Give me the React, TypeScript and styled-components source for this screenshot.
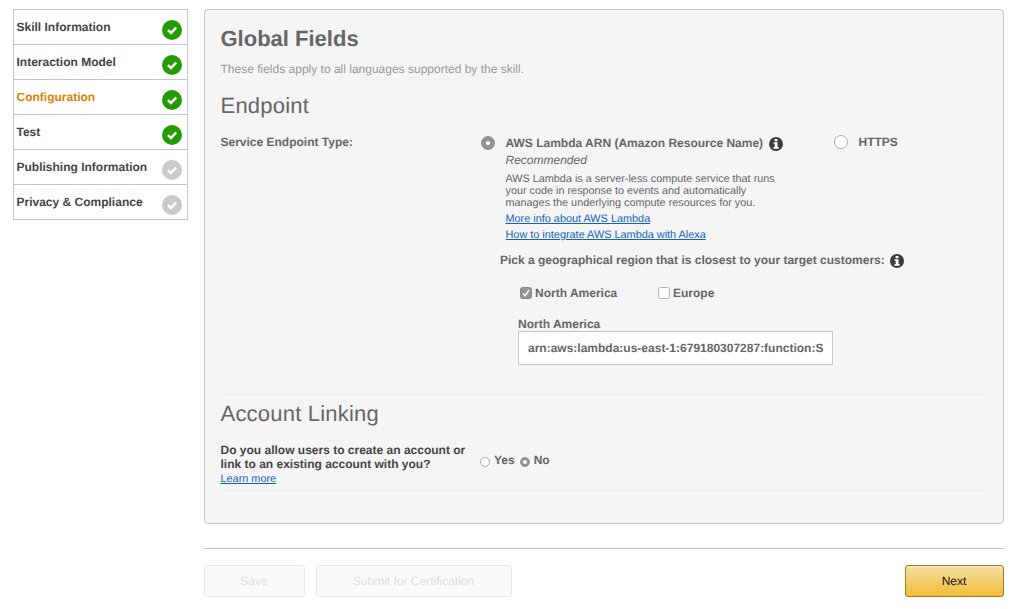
import React from 'react';
import styled, { createGlobalStyle } from 'styled-components';

const GlobalStyle = createGlobalStyle`
  *, *::before, *::after { box-sizing: border-box; }
  body {
    margin: 0;
    background: #fff;
    color: #666;
    font-family: "Liberation Sans", Arial, Helvetica, sans-serif;
    font-size: 12px;
    line-height: 16px;
    text-rendering: geometricPrecision;
  }
`;

const Page = styled.div`
  display: flex;
  align-items: flex-start;
  gap: 16px;
  width: 1016px;
  height: 609px;
  padding: 9px 12px 0 13px;
  overflow: hidden;
`;

const StepList = styled.ul`
  flex: none;
  width: 175px;
  margin: 0;
  padding: 0;
  list-style: none;
  border: 1px solid #c7c7c7;
`;

const Step = styled.li<{ $active?: boolean }>`
  display: flex;
  justify-content: space-between;
  height: 35px;
  padding: 9px 5px 0 2.5px;
  font-weight: bold;
  color: ${p => (p.$active ? '#db7f00' : '#444')};
  & + & { border-top: 1px solid #c7c7c7; }
  &:first-child { height: 34px; }
  svg { flex: none; margin-top: 1px; }
`;

const Main = styled.main`
  flex: none;
  width: 800px;
`;

const Panel = styled.section`
  height: 515px;
  padding: 15px 17px 0 15.5px;
  background: #f5f5f5;
  border: 1px solid #c4c4c4;
  border-radius: 4px;
`;

const Title = styled.h1`
  margin: 0;
  font-size: 22px;
  line-height: 28px;
`;

const Intro = styled.p`
  margin: 8px 0 15px;
  color: #999;
`;

const SectionTitle = styled.h2`
  margin: 0;
  font-size: 22px;
  font-weight: normal;
  line-height: 28px;
  letter-spacing: 0.21px;
`;

const EndpointRow = styled.div`
  display: flex;
  align-items: flex-start;
  height: 274px;
  padding-top: 14px;
`;

const FieldLabel = styled.div`
  flex: none;
  width: 260px;
  font-weight: bold;
`;

const EndpointFields = styled.div`
  flex: 1;
`;

const Choices = styled.div`
  display: flex;
  align-items: flex-start;
`;

const LambdaChoice = styled.div`
  display: flex;
  gap: 11px;
  width: 353px;
  padding-top: 1px;
`;

const HttpsChoice = styled.div`
  display: flex;
  gap: 11px;
  font-weight: bold;
`;

const RadioDot = styled.span<{ $size: number; $checked?: boolean }>`
  flex: none;
  display: flex;
  align-items: center;
  justify-content: center;
  width: ${p => p.$size}px;
  height: ${p => p.$size}px;
  margin-top: 1px;
  border-radius: 50%;
  background: ${p => (p.$checked ? '#929297' : '#fff')};
  border: 1px solid ${p => (p.$checked ? '#929297' : '#ababab')};
  &::after {
    content: '';
    display: ${p => (p.$checked ? 'block' : 'none')};
    width: 4px;
    height: 4px;
    border-radius: 50%;
    background: #fff;
  }
`;

const ChoiceName = styled.div`
  display: flex;
  gap: 5.5px;
  height: 17px;
  font-weight: bold;
  white-space: nowrap;
  svg { flex: none; margin-top: 2px; }
`;

const Recommended = styled.em`
  display: block;
  height: 21px;
`;

const Description = styled.p`
  width: 285px;
  margin: 0 0 2px;
  font-size: 10.84px;
  line-height: 12px;
`;

const Link = styled.a<{ $line: number }>`
  display: block;
  width: max-content;
  font-size: 10.88px;
  line-height: ${p => p.$line}px;
  color: #0f62bd;
  text-decoration: underline;
`;

const RegionPrompt = styled.div`
  display: flex;
  gap: 5.5px;
  padding: 9px 0 0 19.5px;
  font-weight: bold;
  svg { flex: none; margin-top: 2px; }
`;

const Regions = styled.div`
  display: flex;
  margin: 17px 0 15px 39px;
  font-weight: bold;
`;

const Region = styled.div`
  display: flex;
  gap: 3.5px;
  width: 138px;
  svg { flex: none; margin-top: 2px; }
`;

const ArnField = styled.label`
  display: block;
  width: 315px;
  margin-left: 37.5px;
  font-weight: bold;
`;

const ArnInput = styled.input`
  display: block;
  width: 315px;
  height: 34px;
  margin-top: -1px;
  padding: 0 9px;
  border: 1px solid #c4c4c4;
  border-radius: 0;
  background: #fff;
  color: #666;
  font: bold 12px "Liberation Sans", Arial, sans-serif;
  text-rendering: geometricPrecision;
`;

const LinkingSection = styled.div`
  height: 97px;
  padding-top: 5px;
  border: solid #e9e9e9;
  border-width: 1px 0;
`;

const LinkingRow = styled.div`
  display: flex;
  padding-top: 15px;
`;

const Question = styled.div`
  flex: none;
  width: 259.5px;
  font-weight: bold;
  line-height: 14px;
  color: #444;
  white-space: nowrap;
  a { font-weight: normal; }
`;

const Answers = styled.div`
  display: flex;
  gap: 5px;
  padding-top: 9px;
  font-weight: bold;
`;

const Answer = styled.div`
  display: flex;
  gap: 4px;
  span { margin-top: 5px; }
`;

const Footer = styled.footer`
  display: flex;
  margin-top: 24px;
  padding-top: 16px;
  border-top: 1px solid #c4c4c4;
`;

const Button = styled.button<{ $width: number; $primary?: boolean }>`
  width: ${p => p.$width}px;
  height: 32px;
  margin: ${p => (p.$primary ? '0 0 0 auto' : '0 11px 0 0')};
  padding: 0 1px 0 0;
  border: 1px solid ${p => (p.$primary ? '#9a7b24' : '#e7e7e7')};
  border-radius: 3px;
  background: ${p => (p.$primary ? 'linear-gradient(#f7dfa5, #f0bd34)' : '#fafafb')};
  box-shadow: ${p => (p.$primary ? 'inset 0 1px 0 #fbeecb' : 'none')};
  color: ${p => (p.$primary ? '#111' : '#dedede')};
  font: 12px "Liberation Sans", Arial, sans-serif;
  text-rendering: geometricPrecision;
`;

const StatusIcon = ({ done }: { done: boolean }) => (
  <svg width="20" height="20" viewBox="0 0 20 20">
    <circle cx="10" cy="10" r="10" fill={done ? '#229b04' : '#cacaca'} />
    <path d="M5.9 10.1 9 12.9 14.2 7.5" fill="none" stroke="#fff" strokeWidth="2.5" />
  </svg>
);

const InfoIcon = () => (
  <svg width="14" height="14" viewBox="0 0 14 14">
    <circle cx="7" cy="7" r="7" fill="#3c3c3c" />
    <path d="M5.6 1.9h2.9v2.3H5.6zM4.6 5.2h3.9v4.8h1.2v1.7H4.5V10h1.2V6.8H4.6z" fill="#fff" />
  </svg>
);

const CheckIcon = ({ checked }: { checked?: boolean }) => (
  <svg width="12" height="12" viewBox="0 0 12 12">
    <rect x=".5" y=".5" width="11" height="11" rx="2" fill={checked ? '#929297' : '#fff'} stroke={checked ? '#88888d' : '#b0b0b0'} />
    {checked && <path d="M3 6.4 5.1 8.8 9 3" fill="none" stroke="#fff" strokeWidth="1.5" />}
  </svg>
);

const steps = [
  { name: 'Skill Information', done: true },
  { name: 'Interaction Model', done: true },
  { name: 'Configuration', done: true, active: true },
  { name: 'Test', done: true },
  { name: 'Publishing Information', done: false },
  { name: 'Privacy & Compliance', done: false },
];

export default function App() {
  return (
    <>
      <GlobalStyle />
      <Page>
        <StepList>
          {steps.map(s => (
            <Step key={s.name} $active={s.active}>
              {s.name}
              <StatusIcon done={s.done} />
            </Step>
          ))}
        </StepList>
        <Main>
          <Panel>
            <Title>Global Fields</Title>
            <Intro>These fields apply to all languages supported by the skill.</Intro>
            <SectionTitle>Endpoint</SectionTitle>
            <EndpointRow>
              <FieldLabel>Service Endpoint Type:</FieldLabel>
              <EndpointFields>
                <Choices>
                  <LambdaChoice>
                    <RadioDot $size={14} $checked />
                    <div>
                      <ChoiceName>AWS Lambda ARN (Amazon Resource Name)<InfoIcon /></ChoiceName>
                      <Recommended>Recommended</Recommended>
                      <Description>
                        AWS Lambda is a server-less compute service that runs<br />
                        your code in response to events and automatically<br />
                        manages the underlying compute resources for you.
                      </Description>
                      <Link $line={16}>More info about AWS Lambda</Link>
                      <Link $line={16}>How to integrate AWS Lambda with Alexa</Link>
                    </div>
                  </LambdaChoice>
                  <HttpsChoice>
                    <RadioDot $size={14} />
                    HTTPS
                  </HttpsChoice>
                </Choices>
                <RegionPrompt>
                  Pick a geographical region that is closest to your target customers:
                  <InfoIcon />
                </RegionPrompt>
                <Regions>
                  <Region><CheckIcon checked />North America</Region>
                  <Region><CheckIcon />Europe</Region>
                </Regions>
                <ArnField>
                  North America
                  <ArnInput readOnly value="arn:aws:lambda:us-east-1:679180307287:function:S" />
                </ArnField>
              </EndpointFields>
            </EndpointRow>
            <LinkingSection>
              <SectionTitle>Account Linking</SectionTitle>
              <LinkingRow>
                <Question>
                  Do you allow users to create an account or<br />
                  link to an existing account with you?
                  <Link $line={16}>Learn more</Link>
                </Question>
                <Answers>
                  <Answer><RadioDot $size={10} />Yes</Answer>
                  <Answer><RadioDot $size={10} $checked />No</Answer>
                </Answers>
              </LinkingRow>
            </LinkingSection>
          </Panel>
          <Footer>
            <Button $width={101}>Save</Button>
            <Button $width={196}>Submit for Certification</Button>
            <Button $width={99} $primary>Next</Button>
          </Footer>
        </Main>
      </Page>
    </>
  );
}
